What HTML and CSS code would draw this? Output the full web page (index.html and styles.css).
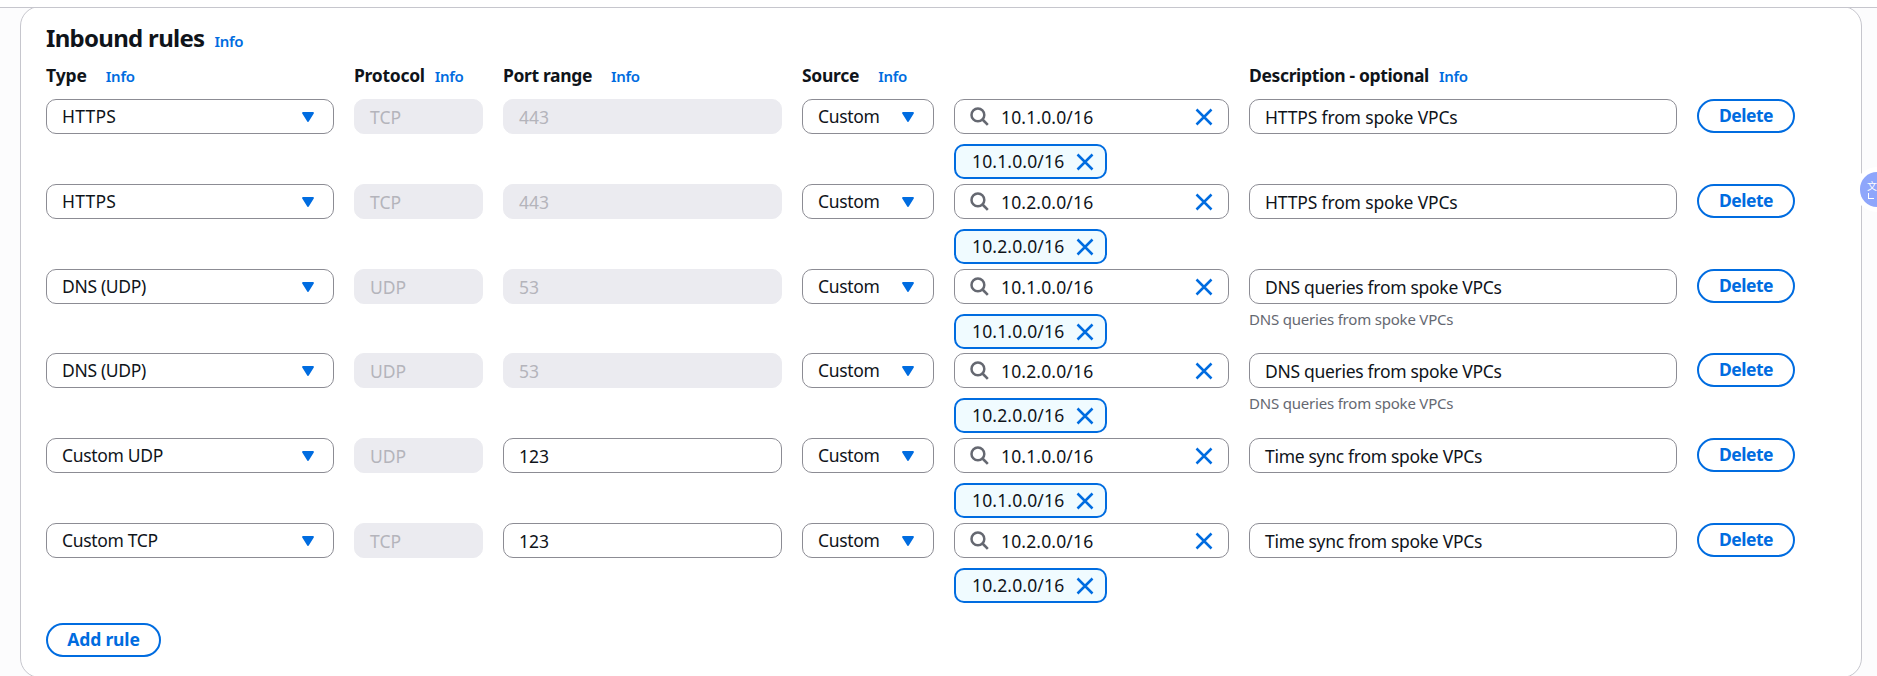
FILE: index.html
```
<!DOCTYPE html>
<html lang="en">
<head>
<meta charset="utf-8">
<title>Inbound rules</title>
<link rel="stylesheet" href="styles.css">
</head>
<body>
<svg width="0" height="0" class="sprite">
  <symbol id="caret" viewBox="0 0 12 10"><path d="M1 1h10L6 9z" fill="#006ce0" stroke="#006ce0" stroke-width="1.8" stroke-linejoin="round"/></symbol>
  <symbol id="close" viewBox="0 0 18 18"><path d="M1.5 1.5l15 15M16.5 1.5l-15 15" fill="none" stroke="#006ce0" stroke-width="2.5"/></symbol>
  <symbol id="search" viewBox="0 0 19 19"><circle cx="7.9" cy="7.9" r="6.4" fill="none" stroke="#656871" stroke-width="2.5"/><path d="M12.5 12.5l5.3 5.3" fill="none" stroke="#656871" stroke-width="2.6"/></symbol>
</svg>
<div class="topbar"></div>
<main class="main">
  <section class="card">
    <div class="title-row"><h2 class="title">Inbound rules</h2><a class="info">Info</a></div>
    <div class="grid labels">
      <div class="label wide t-type"><span>Type</span><a class="info">Info</a></div>
      <div class="label"><span>Protocol</span><a class="info">Info</a></div>
      <div class="label wide t-port"><span>Port range</span><a class="info">Info</a></div>
      <div class="label wide"><span>Source</span><a class="info">Info</a></div>
      <div></div>
      <div class="label t-desc"><span>Description - optional</span><a class="info">Info</a></div>
    </div>
    <div id="rules"></div>
    <button class="btn add">Add rule</button>
  </section>
</main>
<div class="translate"><span class="translate-glyph">文</span><span class="translate-corner"></span></div>
<script src="rules.js"></script>
</body>
</html>
```
FILE: styles.css
```
* { box-sizing: border-box; }
body {
  margin: 0;
  height: 676px;
  overflow: hidden;
  display: flex;
  flex-direction: column;
  background: #fcfcfd;
  color: #0f141a;
  font: 17.5px/22px "Noto Sans", "Open Sans", sans-serif;
}
.sprite { position: absolute; }
.topbar { flex: none; height: 8px; background: #fff; border-bottom: 1px solid #c6c6cd; }
.main { flex: 1; overflow: hidden; padding: 0 15px 0 20px; }
.card {
  width: 1842px;
  height: 672px;
  margin-top: -2px;
  padding: 16px 25px;
  background: #fff;
  border: 1px solid #c6c6cd;
  border-radius: 20px;
}
.title-row { display: flex; align-items: baseline; gap: 10px; height: 30px; }
.title { margin: 0; font-size: 24px; line-height: 30px; font-weight: 700; letter-spacing: -0.7px; }
.info { color: #006ce0; font-size: 15px; font-weight: 600; letter-spacing: -0.3px; }
.grid {
  display: grid;
  grid-template-columns: 288px 129px 279px 132px 275px 428px 98px;
  column-gap: 20px;
}
.labels { margin: 11px 0 13px; height: 22px; }
.label { display: flex; align-items: baseline; gap: 10px; font-weight: 700; letter-spacing: -0.28px; white-space: nowrap; }
.label.wide { gap: 19px; }
.t-type { letter-spacing: -0.1px; }
.t-port, .t-desc { letter-spacing: -0.36px; }
.rule { height: 85px; align-items: start; }
.rule:nth-child(3) { height: 84px; }
.field {
  display: flex;
  align-items: center;
  height: 35px;
  padding: 0 15px;
  background: #fff;
  border: 1px solid #8c8c94;
  border-radius: 10px;
  white-space: nowrap;
}
.select { justify-content: space-between; padding: 0 19px 0 15px; letter-spacing: -0.33px; }
.select span { padding-bottom: 2px; }
.select.spaced { letter-spacing: 0.2px; }
.disabled { background: #ebebf0; border-color: #ebebf0; color: #b4b4bb; }
.desc { letter-spacing: -0.3px; }
.desc.loose { letter-spacing: -0.16px; }
.caret { width: 12px; height: 10px; }
.close { width: 18px; height: 18px; }
.glass { width: 19px; height: 19px; margin-right: 12px; }
.search { justify-content: space-between; padding: 0 15px; letter-spacing: 0.15px; }
.query { display: flex; align-items: center; }
.token {
  display: flex;
  align-items: center;
  justify-content: space-between;
  width: 153px;
  height: 35px;
  margin-top: 10px;
  padding: 0 11px 0 16px;
  background: #f0fbff;
  border: 2px solid #006ce0;
  border-radius: 10px;
  letter-spacing: 0.15px;
}
.token span { padding-bottom: 2px; }
.hint { margin-top: 5px; color: #656871; font-size: 15px; line-height: 20px; letter-spacing: -0.2px; }
.btn {
  height: 34px;
  padding: 0 0 2px;
  background: #fff;
  color: #006ce0;
  border: 2px solid #006ce0;
  border-radius: 17px;
  font: 700 17.5px/22px "Noto Sans", "Open Sans", sans-serif;
  letter-spacing: -0.5px;
}
.add { display: block; width: 115px; margin-top: 15px; letter-spacing: -0.15px; }
.translate {
  position: absolute;
  left: 1860px;
  top: 172px;
  width: 17px;
  height: 35px;
  padding: 8px 0 0 7px;
  border-radius: 17.5px 0 0 17.5px;
  background: #8ea6fb;
  box-shadow: 0 0 0 5px #fff;
  color: #fff;
}
.translate-glyph { display: block; width: 10px; font: 10px/11px "Noto Sans CJK SC", sans-serif; }
.translate-corner { display: block; width: 6px; height: 6px; margin: 2px 0 0 1px; border: solid #fff; border-width: 0 0 1.5px 1.5px; }
```
FILE: rules.js
```
const rules = [
  ["HTTPS", "TCP", "443", "10.1.0.0/16", "HTTPS from spoke VPCs", ""],
  ["HTTPS", "TCP", "443", "10.2.0.0/16", "HTTPS from spoke VPCs", ""],
  ["DNS (UDP)", "UDP", "53", "10.1.0.0/16", "DNS queries from spoke VPCs", "DNS queries from spoke VPCs"],
  ["DNS (UDP)", "UDP", "53", "10.2.0.0/16", "DNS queries from spoke VPCs", "DNS queries from spoke VPCs"],
  ["Custom UDP", "UDP", "123", "10.1.0.0/16", "Time sync from spoke VPCs", ""],
  ["Custom TCP", "TCP", "123", "10.2.0.0/16", "Time sync from spoke VPCs", ""],
];
const icon = (cls, id) => `<svg class="${cls}"><use href="#${id}"/></svg>`;
document.getElementById("rules").innerHTML = rules.map(([type, proto, port, cidr, desc, hint]) => `
  <div class="grid rule">
    <div class="field select ${type === "HTTPS" ? "spaced" : ""}"><span>${type}</span>${icon("caret", "caret")}</div>
    <div class="field disabled">${proto}</div>
    <div class="field ${type.startsWith("Custom") ? "" : "disabled"}">${port}</div>
    <div class="field select"><span>Custom</span>${icon("caret", "caret")}</div>
    <div>
      <div class="field search"><span class="query">${icon("glass", "search")}${cidr}</span>${icon("close", "close")}</div>
      <div class="token"><span>${cidr}</span>${icon("close", "close")}</div>
    </div>
    <div>
      <div class="field desc ${type === "HTTPS" ? "loose" : ""}">${desc}</div>
      ${hint ? `<div class="hint">${hint}</div>` : ""}
    </div>
    <button class="btn">Delete</button>
  </div>`).join("");
```
